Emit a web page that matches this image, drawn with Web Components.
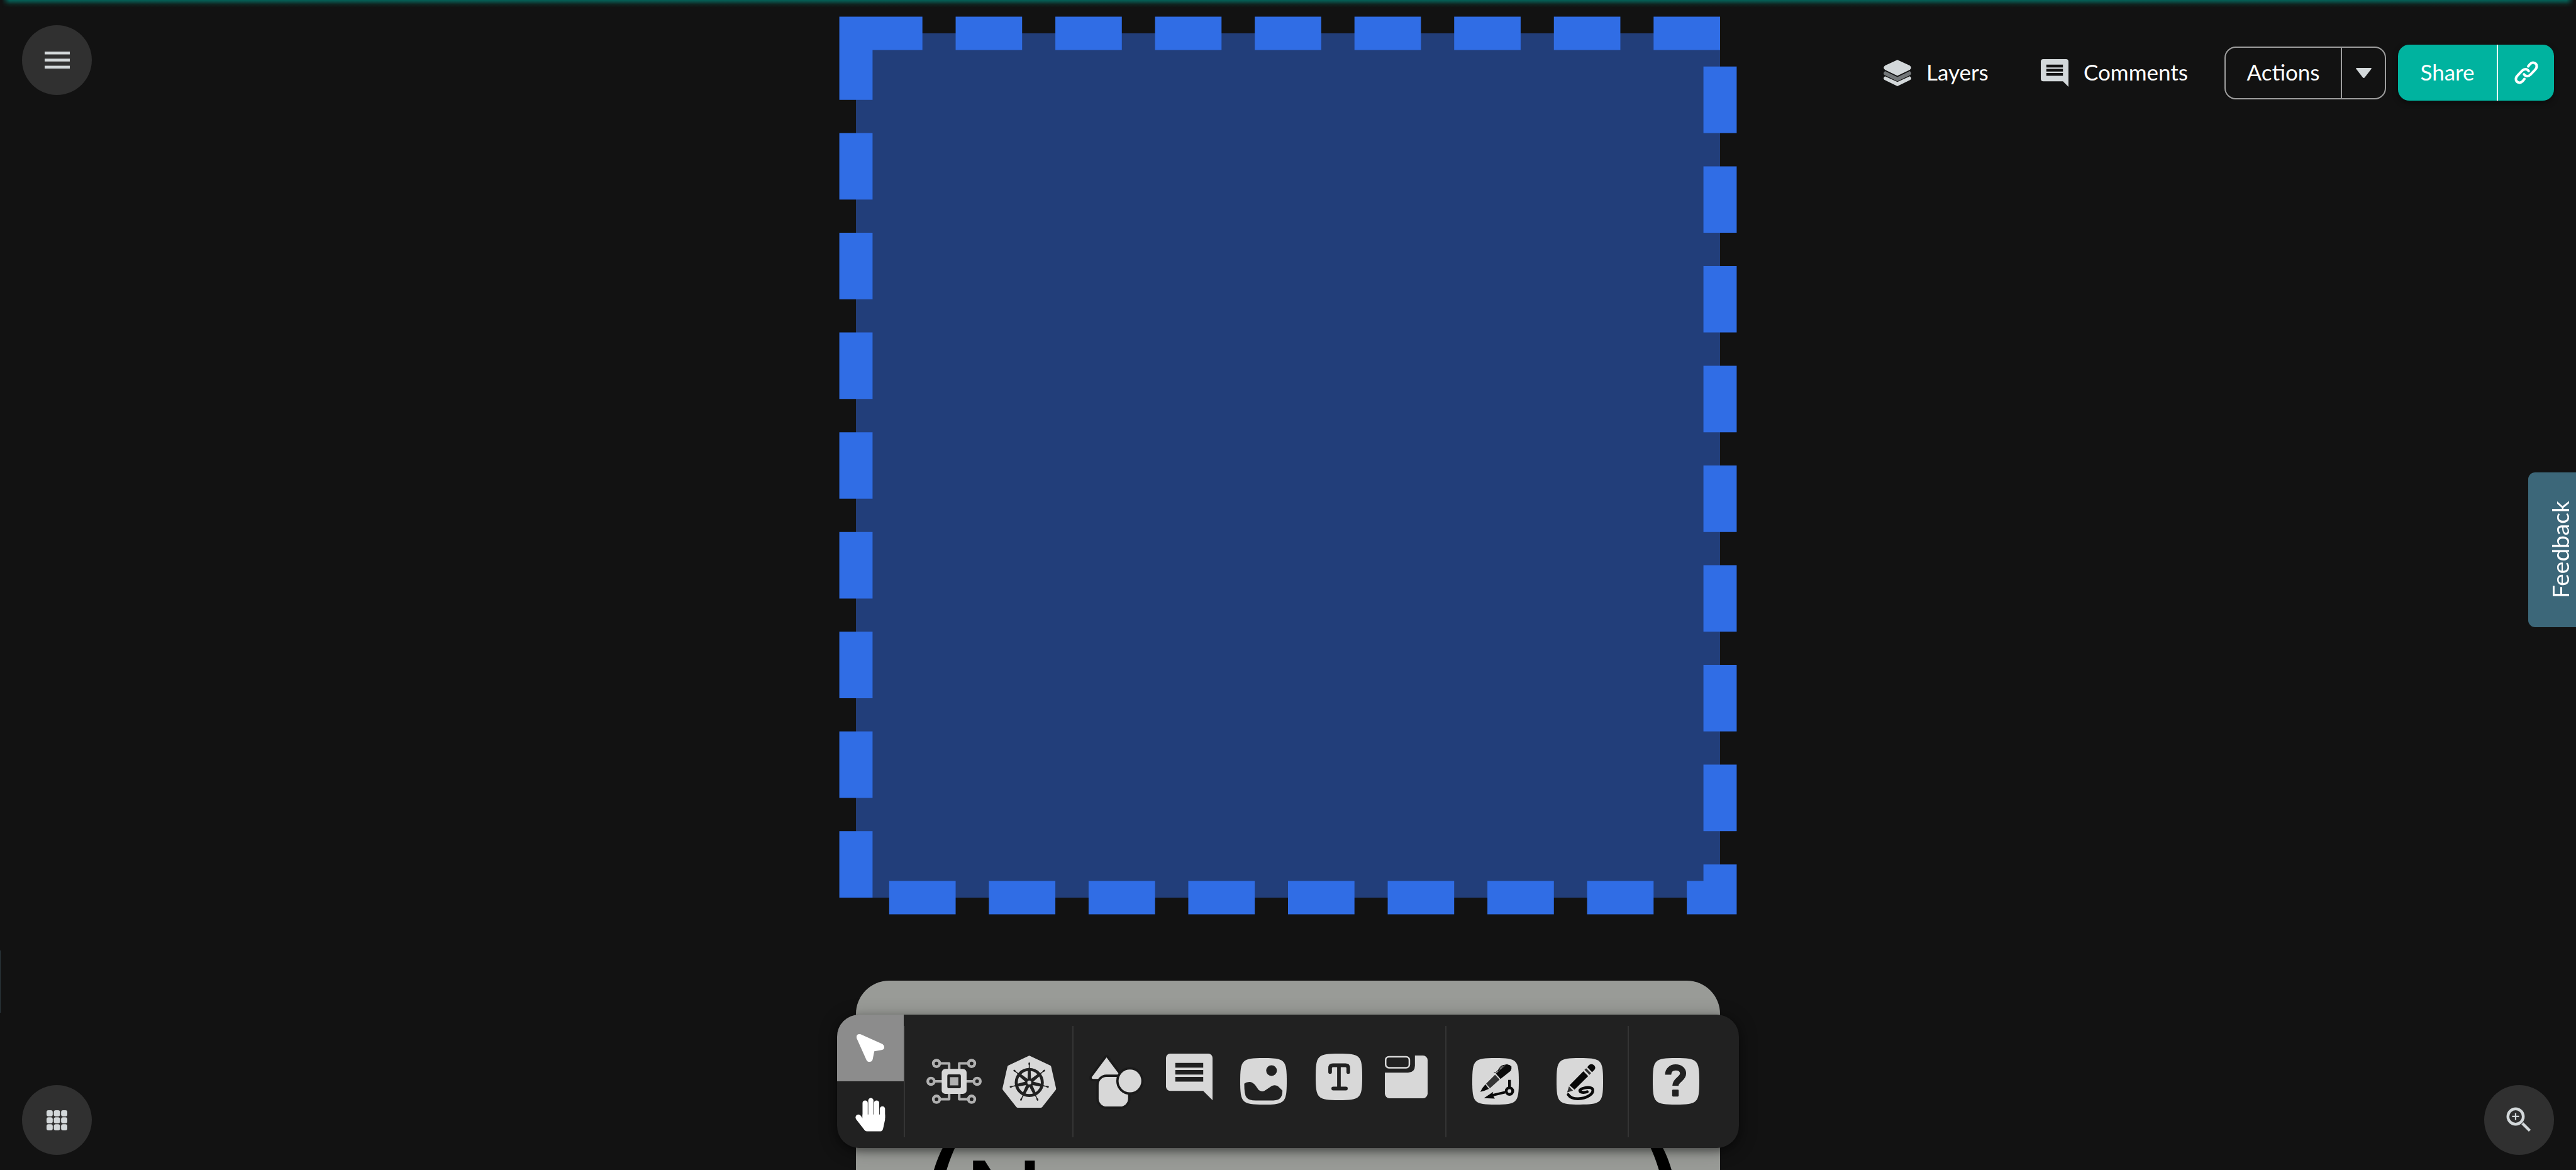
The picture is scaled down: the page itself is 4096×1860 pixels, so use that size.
<!DOCTYPE html>
<html lang="en">
<head>
<meta charset="utf-8">
<title>Design canvas</title>
<style>
  html, body { margin: 0; height: 100%; background: #121212; }
  body { font-family: Lato, "Open Sans", sans-serif; font-size: 35px; line-height: 42px; color: #fff; overflow: hidden; }
</style>
</head>
<body>
<design-app>
  <design-canvas slot="canvas">
    <namespace-node></namespace-node>
    <note-node><span>(</span><span>N</span><span>)</span></note-node>
  </design-canvas>
  <round-button slot="menu" icon="menu" label="Menu"></round-button>
  <top-actions slot="actions">
    <label-button icon="layers">Layers</label-button>
    <label-button icon="comment">Comments</label-button>
    <split-button icon="caret" more="More actions">Actions</split-button>
    <split-button icon="link" more="Copy link" class="primary">Share</split-button>
  </top-actions>
  <feedback-tab slot="side">Feedback</feedback-tab>
  <round-button slot="apps" icon="apps" label="Apps"></round-button>
  <tool-dock slot="dock"></tool-dock>
  <round-button slot="zoom" icon="zoom" label="Zoom"></round-button>
</design-app>

<script>
const SQUIRCLE = '<path fill="#d8d8d8" d="M0 50C0 4 4 0 50 0S100 4 100 50 96 100 50 100 0 96 0 50Z"/>';
const COMMENT = '<path fill="currentColor" fill-rule="evenodd" d="M9 0H91a9 9 0 0 1 9 9V100L80 80H9a9 9 0 0 1-9-9V9a9 9 0 0 1 9-9ZM20 20V30H80V20ZM20 35V45H80V35ZM20 50V60H80V50Z"/>';
const spokes = Array.from({ length: 7 }, (_, i) =>
  `<g transform="rotate(${i * 360 / 7} 57.5 58)"><path d="M54.6 31L53.6 54H61.4L60.4 31Z"/><path d="M56 30L56.6 22 55.6 18Q55.4 14.8 57.5 14.8T59.4 18L58.4 22 59 30Z"/></g>`).join('');
const cells = [0, 15, 30].map(y => [0, 15.8, 31.6].map(x => `<rect x="${x}" y="${y}" width="13.4" height="13" rx="4"/>`).join('')).join('');

/* name: [viewBox width, viewBox height, drawn width, drawn height, markup] */
const ICONS = {
  menu: [54, 36, 40, 27, '<path fill="#d3d8da" d="M0 0H54V6H0ZM0 15H54V21H0ZM0 30H54V36H0Z"/>'],
  apps: [45, 43, 33, 32, `<g fill="#d3d8da">${cells}</g>`],
  zoom: [150, 150, 111, 111, '<g fill="none" stroke="#d3d8da"><circle cx="67.5" cy="67.5" r="16.5" stroke-width="6"/><path stroke-width="3" d="M60 67.5H75M67.5 60V75"/><path stroke-width="6" d="M82.2 82.2L98 98"/></g>'],
  layers: [59, 57, 44, 42, '<path fill="#d3d8da" d="M27 1.2Q29.5-.8 32 1.2L56 12.6Q61.5 17 56 21.8L29.5 34.5 3 21.8Q-2.5 17 3 12.6Z"/><path fill="#727678" d="M3 24.3L29.5 37.2 56 24.3Q61.5 29 57 33L29.5 46.5 2 33Q-2.5 29 3 24.3Z"/><path fill="#d3d8da" d="M3 35.5L29.5 48 56 35.5Q61.5 40 57 43.5L29.5 57 2 43.5Q-2.5 40 3 35.5Z"/>'],
  comment: [100, 100, 44, 44, `<g color="#d3d8da">${COMMENT}</g>`],
  caret: [34, 21, 25, 16, '<path fill="#d3d8da" d="M1.5 0H32.5Q34.5.4 33.5 2L19 20Q17 22 15 20L.5 2Q-.5.4 1.5 0Z"/>'],
  link: [51, 50, 38, 37, '<g fill="none" stroke="#fff" stroke-width="5.4" stroke-linecap="round"><path d="M29.5 11.5L33.5 6.5C39 1 46 4 47.5 9 48.5 13 47 16 44 19L34 29.5C30 33.5 24 33.5 20.5 28.5"/><path d="M21.5 38.5L17.5 43.5C12 49 5 46 3.5 41 2.5 37 4 34 7 31L17 20.5C21 16.5 27 16.5 30.5 21.5"/></g>'],
  pointer: [144, 144, 106, 106, '<path fill="#fff" d="M42.3 51Q40.5 43.5 47 42L51 42.5 98 63.5Q103 67 101.5 73 100 76 96 76.5L80.4 79 77 96Q76 101.5 70 102 65.5 102 63.5 98Z"/>'],
  hand: [144, 144, 106, 106, '<g fill="#fff"><rect x="55" y="41.3" width="11.3" height="44" rx="5.6"/><rect x="67.4" y="36" width="11.2" height="48" rx="5.6"/><rect x="79.8" y="41.3" width="11.2" height="44" rx="5.6"/><rect x="92.2" y="54" width="11.4" height="30" rx="5.6"/><path d="M55 71.7H103.6V83L99.5 102Q98 108 94 108H64Q61 108 59 105L41 82Q38 76 43 72.5 49 70 52.5 76L55 80Z"/></g>'],
  circuit: [120, 98, 88, 72, '<g fill="none" stroke="#b0b0b0" stroke-width="6" stroke-linejoin="round"><circle cx="22" cy="10.3" r="7"/><circle cx="98" cy="10.3" r="7"/><circle cx="10" cy="49" r="7"/><circle cx="110" cy="49" r="7"/><circle cx="22" cy="87.7" r="7"/><circle cx="98" cy="87.7" r="7"/><path stroke-width="5.6" d="M29 10.3H49.3V24M91 10.3H71.2V24M17 49H35M103 49H85M29 87.7H49.3V74M91 87.7H71.2V74"/></g><rect x="33.2" y="22" width="54" height="54.3" rx="8" fill="#d8d8d8"/><rect x="45.4" y="34" width="29.4" height="30" rx="3" fill="#212121"/><rect x="51" y="40" width="18.3" height="17.8" fill="#b0b0b0"/>'],
  helm: [116, 112, 86, 83, `<path fill="#d8d8d8" stroke="#d8d8d8" stroke-width="8" stroke-linejoin="round" d="M57.5 4.5L100.5 24.8 111 71.5 82 108H33L4 71.5 14.5 24.8Z"/><g fill="#212121"><circle cx="57.5" cy="58" r="28" fill="none" stroke="#212121" stroke-width="6.4"/>${spokes}<circle cx="57.5" cy="58" r="8.5"/></g><circle cx="57.5" cy="58" r="4.2" fill="#d8d8d8"/>`],
  shapes: [117, 119, 86, 88, '<g fill="#d8d8d8" stroke="#1a1a1a" stroke-width="10" stroke-linejoin="round" paint-order="stroke"><path d="M37.3 8L5.8 50Q4 54.5 8.5 54.5H66Q71 54 68.8 50Z"/><rect x="20.3" y="50" width="63.7" height="63.7" rx="17"/><circle cx="88" cy="58.7" r="24.6"/></g>'],
  note: [100, 100, 74, 74, `<g color="#d8d8d8">${COMMENT}</g>`],
  image: [100, 100, 74, 74, SQUIRCLE + '<g fill="#212121"><circle cx="67.3" cy="27" r="11.5"/><path d="M8.7 55Q13 51.3 19.5 51.3 27 51.3 33 59L39 68Q43 72 47.5 71.7 51 71.5 55 68.5L66 61Q74 56 81 60.5L90.7 70Q91 83 84 88 79 91.3 65 91.3H34Q18 91.3 13.5 84.5 8.7 79 8.7 55Z"/></g>'],
  type: [100, 100, 74, 74, SQUIRCLE + '<path fill="none" stroke="#212121" stroke-width="7.8" stroke-linecap="round" d="M31 39.5V31q0-6 6-6h27q6 0 6 6v8.5M50 25V75M37.7 75H65"/>'],
  folder: [92, 92, 68, 68, '<rect x="1.7" y="2.7" width="51" height="23.6" rx="7" fill="none" stroke="#d8d8d8" stroke-width="3.4"/><path fill="#d8d8d8" d="M64.7 0H82a10 10 0 0 1 10 10V82a10 10 0 0 1-10 10H10a10 10 0 0 1-10-10V37H50Q64.7 36 64.7 22Z"/>'],
  pen: [100, 100, 74, 74, SQUIRCLE + '<g fill="#0a0a0a"><path d="M17.3 72.7Q21 64 28.3 56.3L35.7 66.3Q26 71 17.3 72.7Z"/><path fill="#333" d="M49 35.7L58.7 46.3 38 65 29.7 55Z"/><path d="M50.7 33.3L72 15Q80 12.3 83.6 18 85.5 23 82 28L60.7 45Z"/><path fill="none" stroke="#0a0a0a" stroke-width="1.5" d="M46.7 31.7Q53 30.5 56 26 61 17 66 16 70 15.5 64 20L56 28M66 16L76 14"/><circle cx="80" cy="71" r="7" fill="none" stroke="#0a0a0a" stroke-width="6"/><path d="M77 47H83V63H77ZM70 71L44 77 45 72.8 25 86.2 48.5 87.3 45.5 82 71.5 76Z"/></g>'],
  pencil: [100, 100, 74, 74, SQUIRCLE + '<g fill="#0a0a0a"><path fill="#333" d="M22.7 74L26.7 60.7 35.3 70Z"/><path d="M28 58.3L57.7 28.3 68 38.7 38.7 68Z"/><path fill="#333" d="M60 25.5L63.7 22 74.3 32.3 70.7 36Z"/><path d="M66 19.5L70 15Q76 11 81 16 85.5 21.5 80.5 26.5L76.3 30.3Z"/><path fill="none" stroke="#0a0a0a" stroke-width="6" stroke-linecap="round" d="M25 78.5C29 85 37 87.5 46 87.5 66 87 79 77 78 68.5 77 62 66 62.8 61 64 52 66 49 69 50.5 71.5 53 75 62 74 66 72.5"/></g>'],
  help: [100, 100, 74, 74, SQUIRCLE + '<path fill="none" stroke="#212121" stroke-width="13.2" d="M33 35.8C33 26 40 20.2 49.3 20.2 59 20.2 65.1 26 65.1 33.5 65.1 45 49 47 48.7 59.5"/><rect x="41.7" y="68" width="14" height="14.7" rx="2" fill="#212121"/>'],
};
const icon = name => {
  const [vw, vh, w, h, body] = ICONS[name];
  return `<svg viewBox="0 0 ${vw} ${vh}" width="${w}" height="${h}" preserveAspectRatio="none" aria-hidden="true">${body}</svg>`;
};
const RESET = `
  * { box-sizing: border-box; }
  button { margin: 0; padding: 0; border: 0; background: none; color: inherit; font: inherit; cursor: pointer;
           display: flex; align-items: center; justify-content: center; }
  .label { padding-bottom: 4px; }
  svg { display: block; flex: none; overflow: visible; }`;

class BaseElement extends HTMLElement {
  connectedCallback() {
    if (this.shadowRoot) return;
    this.attachShadow({ mode: 'open' }).innerHTML = `<style>${RESET}${this.css()}</style>${this.html()}`;
  }
  css() { return ''; }
  html() { return '<slot></slot>'; }
}

customElements.define('design-app', class extends BaseElement {
  css() { return `
    :host { display: grid; grid-template: 100vh / 100%; overflow: hidden; }
    .layer { grid-area: 1 / 1; min-width: 0; min-height: 0; }
    .ui { display: flex; flex-direction: column; z-index: 1; }
    .glow { grid-area: 1 / 1; z-index: 1; height: 12px; margin: 0 3px;
            background: linear-gradient(#046157, #0a4842 3px, #10231f 7px, #12121200 12px);
            mask-image: linear-gradient(90deg, transparent, #000 12px calc(100% - 12px), transparent); }
    header { display: flex; justify-content: space-between; align-items: flex-start; padding: 40px 35px 0; }
    main { flex: 1; display: flex; justify-content: space-between; align-items: flex-start; }
    .handle { width: 1px; height: 99px; background: #2b363c; align-self: flex-end; margin-bottom: 3px; }
    footer { display: flex; justify-content: space-between; align-items: flex-end; padding: 0 35px 24px; }`; }
  html() { return `
    <div class="layer"><slot name="canvas"></slot></div>
    <div class="glow"></div>
    <div class="layer ui">
      <header><slot name="menu"></slot><slot name="actions"></slot></header>
      <main><div class="handle"></div><slot name="side"></slot></main>
      <footer><slot name="apps"></slot><slot name="dock"></slot><slot name="zoom"></slot></footer>
    </div>`; }
});

customElements.define('design-canvas', class extends BaseElement {
  css() { return `:host { display: flex; flex-direction: column; align-items: center; gap: 132px; height: 100vh; padding-top: 53px; box-sizing: border-box; overflow: hidden; }`; }
});

customElements.define('namespace-node', class extends BaseElement {
  css() { return `:host { display: block; flex: none; width: 1374px; } svg { width: 100%; }`; }
  html() { return `<svg viewBox="0 0 26 26"><path d="M0 0H26V26H0Z" fill="#223e7a" stroke="#306de5" stroke-width="1" stroke-dasharray="2 1"/></svg>`; }
});

customElements.define('note-node', class extends BaseElement {
  css() { return `
    :host { display: flex; flex: none; align-items: flex-start; width: 1374px; height: 600px; box-sizing: border-box;
            border-radius: 53px; background: #999b97; color: #000; padding: 245px 44px 0 91px; font: 170px/206px Inter, sans-serif; }
    ::slotted(:first-child), ::slotted(:last-child) { font-size: 220px; }
    ::slotted(:last-child) { margin-left: auto; }`; }
});

customElements.define('round-button', class extends BaseElement {
  css() { return `:host { display: block; } button { width: 111px; height: 111px; border-radius: 50%; background: #303030; }`; }
  html() { return `<button type="button" aria-label="${this.getAttribute('label')}">${icon(this.getAttribute('icon'))}</button>`; }
});

customElements.define('top-actions', class extends BaseElement {
  css() { return `:host { display: grid; grid-template-columns: 250px 292px 257px 267px; align-items: center; margin-top: 31px; }
    ::slotted(:last-child) { margin-left: 19px; }`; }
});

customElements.define('label-button', class extends BaseElement {
  css() { return `:host { display: block; } button { gap: 24px; }`; }
  html() { return `<button type="button">${icon(this.getAttribute('icon'))}<span class="label"><slot></slot></span></button>`; }
});

customElements.define('split-button', class extends BaseElement {
  css() { return `
    :host { display: flex; height: 84px; border: 2px solid #9e9e9e; border-radius: 18px; box-sizing: border-box; overflow: hidden; }
    .main { flex: 1; }
    .more { width: 70px; border-left: 2px solid #9e9e9e; }
    :host(.primary) { height: 89px; border: 0; background: #00b39f; box-shadow: 0 4px 10px #00000066; }
    :host(.primary) .more { width: 91px; border-color: #fff; }`; }
  html() { return `<button class="main label" type="button"><slot></slot></button>
    <button class="more" type="button" aria-label="${this.getAttribute('more')}">${icon(this.getAttribute('icon'))}</button>`; }
});

customElements.define('feedback-tab', class extends BaseElement {
  css() { return `:host { display: block; margin-top: 591px; }
    button { width: 76px; height: 246px; border-radius: 0 11px 11px 0; background: #3c6779; writing-mode: vertical-rl; transform: rotate(180deg);
             font-size: 37px; padding-right: 26px; }`; }
  html() { return `<button type="button"><slot></slot></button>`; }
});

customElements.define('tool-dock', class extends BaseElement {
  css() { return `
    :host { display: flex; align-items: center; height: 212px; margin-bottom: 11px; border-radius: 35px; background: #212121; overflow: hidden;
            box-shadow: 0 5px 13px #00000066, 0 4px 30px #00000040; }
    .mode { width: 106px; align-self: stretch; }
    .mode button { width: 106px; height: 106px; }
    .mode .on { background: #8c8c8c; }
    .group { display: flex; align-items: center; padding: 0 var(--end) 0 var(--start); }
    .group button { width: var(--cell); height: 120px; }
    .raised { padding-bottom: 14px; }
    hr { width: 2px; height: 177px; margin: 0; border: 0; background: #343434; }`; }
  html() {
    const tool = (name, label, cell, cls = '') =>
      `<button type="button" class="${cls}" style="--cell:${cell}px" aria-label="${label}">${icon(name)}</button>`;
    return `
    <div class="mode"><button type="button" class="on" aria-label="Select">${icon('pointer')}</button><button type="button" aria-label="Pan">${icon('hand')}</button></div>
    <hr>
    <div class="group" style="--start:18px;--end:8px">${tool('circuit', 'Components', 120)}${tool('helm', 'Kubernetes', 120)}</div>
    <hr>
    <div class="group" style="--start:9px;--end:14px">${tool('shapes', 'Shapes', 118)}${tool('note', 'Comment', 114, 'raised')}${tool('image', 'Image', 122)}${tool('type', 'Text', 118, 'raised')}${tool('folder', 'Section', 96, 'raised')}</div>
    <hr>
    <div class="group" style="--start:11px;--end:9px">${tool('pen', 'Pen', 134)}${tool('pencil', 'Pencil', 134)}</div>
    <hr>
    <div class="group" style="--start:20px;--end:45px">${tool('help', 'Help', 110)}</div>`; }
});
</script>
</body>
</html>
